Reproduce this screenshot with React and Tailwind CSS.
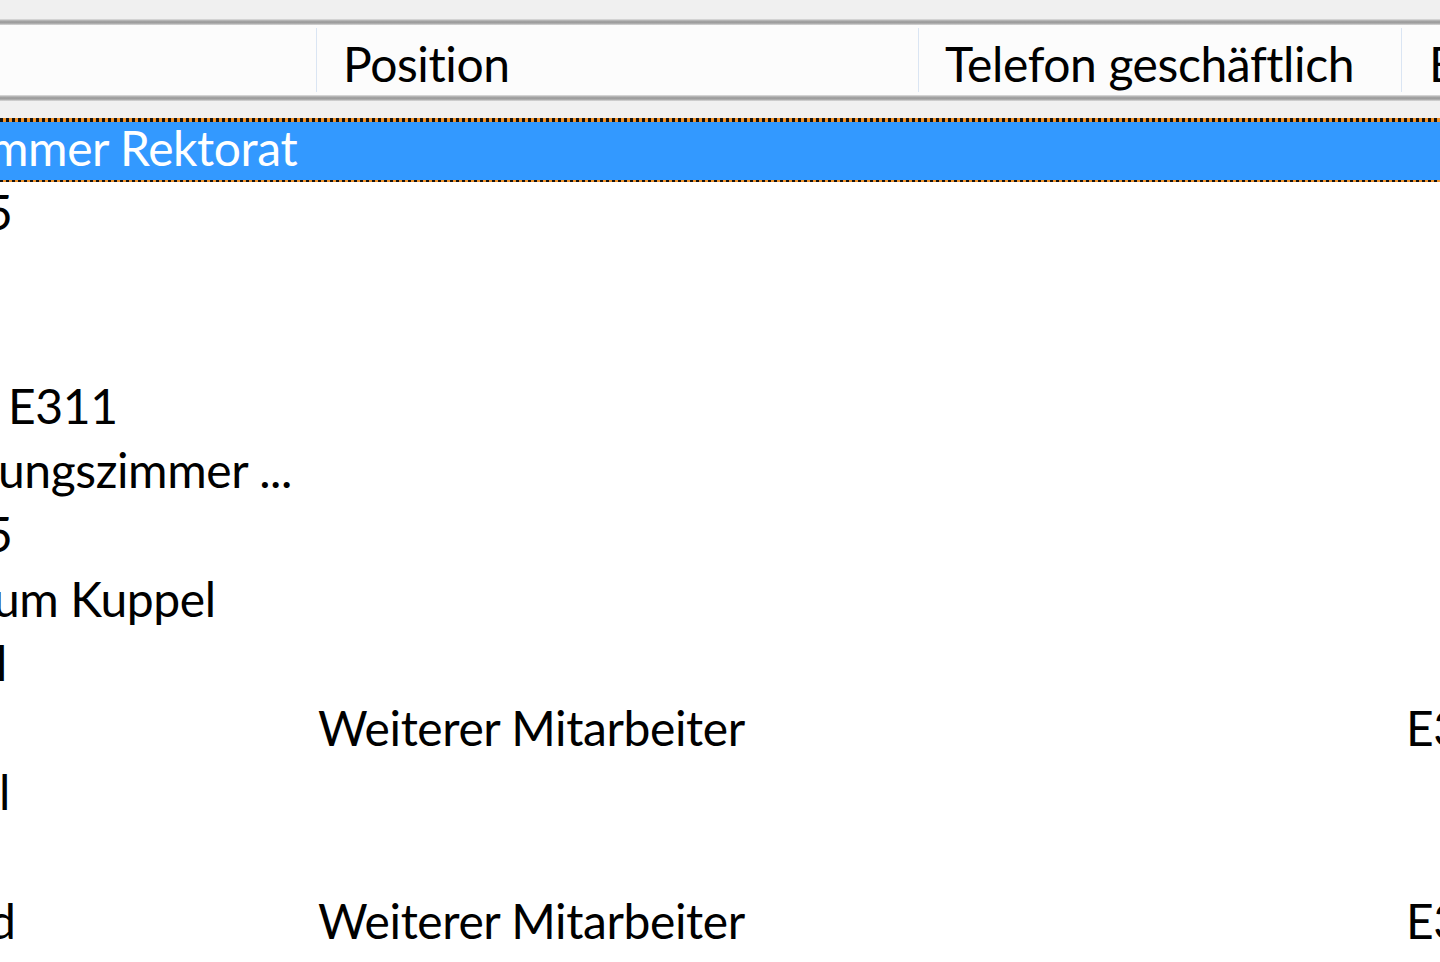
import React from 'react'

const ROWS = [
  { name: 'mmer Rektorat', nameOffset: '-ml-[11px]', selected: true },
  { name: '5', nameOffset: '-ml-[15px]' },
  {},
  {},
  { name: 'E311', nameOffset: 'ml-[8px]' },
  { name: 'ungszimmer ...', nameOffset: '-ml-[2px]' },
  { name: '5', nameOffset: '-ml-[15px]' },
  { name: 'um Kuppel', nameOffset: '-ml-[7px]' },
  { name: 'l', nameOffset: '-ml-[4px]' },
  { position: 'Weiterer Mitarbeiter', room: 'E3' },
  { name: 'l', nameOffset: '-ml-[1px]' },
  {},
  { name: 'd', nameOffset: '-ml-[11px]', position: 'Weiterer Mitarbeiter', room: 'E3' },
  {},
]

function Divider() {
  return <div className="h-[6px] shrink-0 bg-[linear-gradient(#e2e2e2,#a3a3a3_35%,#9c9c9c_65%,#dadada)]" />
}

function HeaderSep() {
  return <div className="w-px shrink-0 self-stretch my-[3px] bg-[#dae5f3]" />
}

// focus rectangle: alternating dark / orange dots
function Dots() {
  return (
    <div className="h-[4px] bg-[repeating-linear-gradient(90deg,#141414_0px,#141414_3px,#f0922a_3px,#f0922a_6px)]" />
  )
}

function Row({ row }) {
  const text = row.selected ? 'text-white' : 'text-black'
  return (
    <div className={`relative flex h-[64.4px] shrink-0 ${row.selected ? 'bg-[#3399ff]' : 'bg-white'}`}>
      {row.selected && (
        <div className="absolute inset-x-0 top-0">
          <Dots />
        </div>
      )}
      <div className={`w-[316px] shrink-0 overflow-hidden whitespace-nowrap leading-[60px] ${text}`}>
        {row.name && <span className={`inline-block ${row.nameOffset}`}>{row.name}</span>}
      </div>
      <div className={`w-[603px] shrink-0 pl-[2px] whitespace-nowrap leading-[60px] ${text}`}>
        {row.position}
      </div>
      <div className="w-[483px] shrink-0" />
      <div className={`flex-1 pl-[4px] whitespace-nowrap leading-[60px] ${text}`}>{row.room}</div>
      {row.selected && (
        <div className="absolute inset-x-0 -bottom-[2px]">
          <Dots />
        </div>
      )}
    </div>
  )
}

export default function App() {
  return (
    <div className="w-[1440px] h-[962px] overflow-hidden bg-white flex flex-col font-['Lato','Noto_Sans',sans-serif] text-[48px] tracking-[-0.4px]">
      <div className="h-[19px] shrink-0 bg-[#f0f0f0]" />
      <Divider />

      {/* column header */}
      <div className="flex h-[70px] shrink-0 bg-[#fcfcfc] text-black">
        <div className="w-[316px] shrink-0" />
        <HeaderSep />
        <div className="w-[601px] shrink-0 pl-[26px] pt-[9px] leading-[60px] whitespace-nowrap">Position</div>
        <HeaderSep />
        <div className="w-[482px] shrink-0 pl-[26px] pt-[9px] leading-[60px] whitespace-nowrap">
          Telefon geschäftlich
        </div>
        <HeaderSep />
        <div className="flex-1 pl-[27px] pt-[9px] leading-[60px] whitespace-nowrap">Büro</div>
      </div>

      <Divider />
      <div className="h-[17px] shrink-0 bg-[#f0f0f0]" />

      <div className="flex flex-col shrink-0">
        {ROWS.map((row, i) => (
          <Row key={i} row={row} />
        ))}
      </div>
    </div>
  )
}
